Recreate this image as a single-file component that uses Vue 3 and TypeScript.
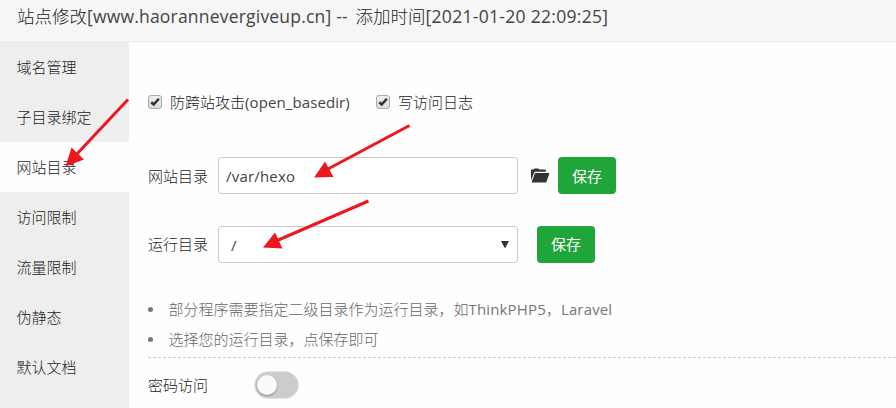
<script setup lang="ts">
import { ref } from 'vue'

const menu = ['域名管理', '子目录绑定', '网站目录', '访问限制', '流量限制', '伪静态', '默认文档']
const active = ref(2)
const crossSite = ref(true)
const accessLog = ref(true)
const sitePath = ref('/var/hexo')
const runPath = ref('/')
const passwordAccess = ref(false)
</script>

<template>
  <div class="dialog">
    <header class="title">
      <span>站点修改</span><span class="latin domain">[www.haorannevergiveup.cn] --&nbsp;</span><span>添加时间</span><span class="latin date">[2021-01-20 22:09:25]</span>
    </header>
    <div class="body">
      <nav class="menu">
        <a v-for="(item, i) in menu" :key="item" class="menu-item" :class="{ active: i === active }" @click="active = i">{{ item }}</a>
      </nav>
      <main class="content">
        <div class="checks">
          <label class="check first" @click="crossSite = !crossSite">
            <span class="box"><svg v-if="crossSite" viewBox="0 0 14 14"><path d="M2.600 7.300 5.500 9.900 11.500 3.200" /></svg></span>
            <span>防跨站攻击</span><span class="latin basedir">(open_basedir)</span>
          </label>
          <label class="check" @click="accessLog = !accessLog">
            <span class="box"><svg v-if="accessLog" viewBox="0 0 14 14"><path d="M2.600 7.300 5.500 9.900 11.500 3.200" /></svg></span>
            <span>写访问日志</span>
          </label>
        </div>
        <div class="row site">
          <span class="label">网站目录</span>
          <input v-model="sitePath" class="field" type="text" spellcheck="false" />
          <svg class="folder" viewBox="0 0 20 16">
            <path d="M1 12.5V2.2Q1 1.5 1.8 1.5H3.5L4.3.5H8.4L9.2 1.6H15Q15.8 1.6 15.8 2.4V3.8H5.2Q4.5 3.8 4.2 4.5Z" />
            <path d="M5.700 5H18.800Q19.600 5 19.300 5.800L16.500 13.800Q16.200 14.600 15.400 14.600H2.300Q1.400 14.600 1.800 13.700L4.700 5.700Q5 5 5.700 5Z" />
          </svg>
          <button class="save">保存</button>
        </div>
        <div class="row">
          <span class="label raised">运行目录</span>
          <div class="field select">
            <span>{{ runPath }}</span>
            <svg viewBox="0 0 8 8"><path d="M0 0H8L4 7.5Z" /></svg>
          </div>
          <button class="save run">保存</button>
        </div>
        <ul class="tips">
          <li><span>部分程序需要指定二级目录作为运行目录，如</span><span class="latin think">ThinkPHP5</span><span>，</span><span class="latin laravel">Laravel</span></li>
          <li>选择您的运行目录，点保存即可</li>
        </ul>
        <div class="access">
          <span>密码访问</span>
          <button class="toggle" :class="{ on: passwordAccess }" aria-label="密码访问" @click="passwordAccess = !passwordAccess"><i></i></button>
        </div>
      </main>
    </div>
    <svg class="arrows" viewBox="0 0 896 408">
      <g class="shafts"><path d="M128 99.500 76 155" /><path d="M409.500 125.500 328 169" /><path d="M368.500 201 276 241" /></g>
      <path d="M65.500 166.500 71.500 147.500 84 159.500Z" />
      <path d="M314 177.500 325 161.500 333.500 177Z" />
      <path d="M263 247.500 275 232.500 282.500 248.500Z" />
    </svg>
  </div>
</template>

<style>
body {
  margin: 0;
}
</style>

<style scoped>
.dialog {
  position: relative;
  width: 896px;
  height: 408px;
  overflow: hidden;
  background: #fefefe;
  color: #1c1c1c;
  font: 300 15px/20px "Noto Sans CJK SC", sans-serif;
}
.latin {
  color: #444;
  font-family: "Open Sans", "Noto Sans CJK SC", sans-serif;
  font-weight: 400;
}
.title {
  box-sizing: border-box;
  display: flex;
  height: 42px;
  padding: 3px 17px 0;
  border-bottom: 1px solid #ebebeb;
  background: #f6f6f6;
  font-size: 17.5px;
  line-height: 26px;
  white-space: pre;
}
.domain {
  width: 268.5px;
  letter-spacing: 0.2px;
}
.date {
  letter-spacing: 0.3px;
}
.body {
  display: flex;
  height: 366px;
}
.menu {
  flex: none;
  width: 129px;
  background: #eee;
}
.menu-item {
  display: block;
  height: 50px;
  padding-left: 16.5px;
  line-height: 50px;
  cursor: pointer;
}
.menu-item.active {
  background: #fefefe;
}
.content {
  flex: 1;
  padding: 50px 0 0 19px;
}
.checks,
.check,
.row,
.access {
  display: flex;
  align-items: center;
}
.checks {
  height: 20px;
}
.check.first {
  width: 228px;
}
.box {
  box-sizing: border-box;
  width: 14px;
  height: 14px;
  margin-right: 8px;
  border: 1px solid #aaa;
  border-radius: 3px;
  background: linear-gradient(#eee, #dcdcdc);
}
.box svg {
  display: block;
  width: 12px;
  height: 12px;
}
.box path {
  fill: none;
  stroke: #333;
  stroke-width: 3;
}
.basedir {
  letter-spacing: 0.1px;
}
.row {
  height: 37px;
}
.row.site {
  margin: 45px 0 32px;
}
.label {
  width: 70px;
}
.label.raised {
  padding-bottom: 2px;
}
.field {
  box-sizing: border-box;
  width: 300px;
  height: 37px;
  padding: 0 7px;
  border: 1px solid #ccc;
  border-radius: 3px;
  background: #fff;
  color: #444;
  font: 400 15px/20px "Open Sans", sans-serif;
  letter-spacing: 0.2px;
}
.select {
  display: flex;
  align-items: center;
  justify-content: space-between;
  padding: 0 8px 0 12px;
}
.select svg {
  width: 8px;
  height: 8px;
}
.select path,
.folder {
  fill: #333;
}
.folder {
  width: 20px;
  height: 16px;
  margin: 0 8px 0 12px;
}
.save {
  width: 58px;
  height: 37px;
  padding: 0;
  border: 0;
  border-radius: 4px;
  background: #20a53a;
  color: #fff;
  font: 400 15px/20px "Noto Sans CJK SC", sans-serif;
}
.save.run {
  margin-left: 19px;
  padding-bottom: 2px;
}
.tips {
  margin: 31px 0 0;
  padding: 0 0 3px;
  border-bottom: 1px dashed #ccc;
  color: #666;
  list-style: none;
}
.tips .latin {
  color: #777;
  letter-spacing: 0.15px;
}
.tips li {
  display: flex;
  align-items: center;
  height: 30px;
}
.tips li::before {
  width: 5px;
  height: 5px;
  margin-right: 15.5px;
  border-radius: 50%;
  background: #777;
  content: "";
}
.access {
  height: 54px;
}
.toggle {
  box-sizing: border-box;
  display: flex;
  align-items: center;
  width: 45px;
  height: 28px;
  margin-left: 46px;
  padding: 0 2px;
  border: 1px solid #e4e4e4;
  border-radius: 14px;
  background: #ccc;
}
.toggle.on {
  justify-content: flex-end;
  background: #20a53a;
}
.toggle i {
  width: 20px;
  height: 20px;
  border-radius: 50%;
  background: #fafafa;
  box-shadow: 0 1px 2px #888;
}
.arrows {
  position: absolute;
  inset: 0;
  fill: #ed171f;
  pointer-events: none;
}
.shafts {
  fill: none;
  stroke: #ed171f;
  stroke-width: 3;
}
</style>
